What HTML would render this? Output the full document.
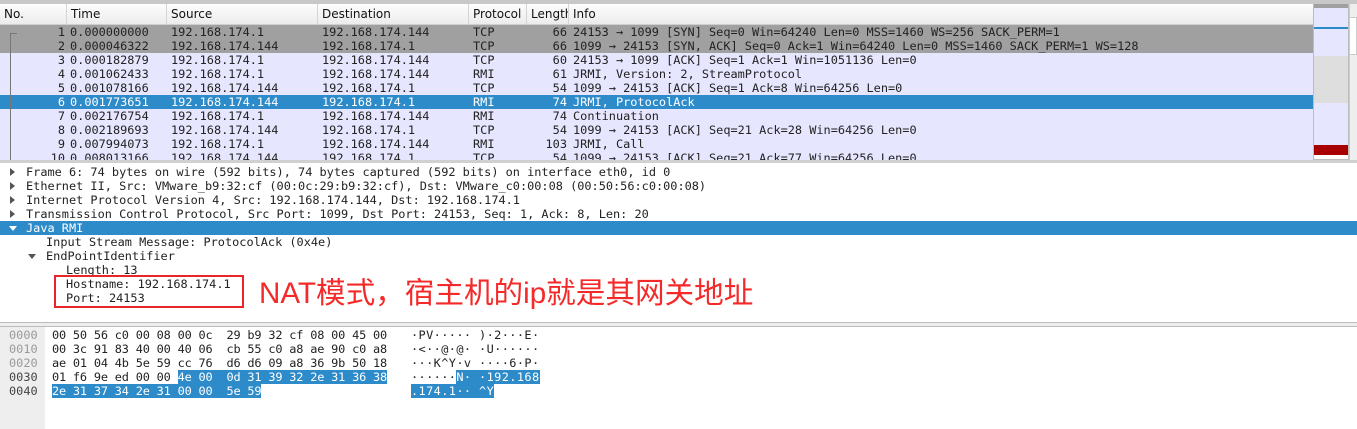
<!DOCTYPE html>
<html><head><meta charset="utf-8"><style>
*{margin:0;padding:0;box-sizing:border-box}
body{width:1357px;height:429px;overflow:hidden;background:#fff;position:relative;font-family:"DejaVu Sans Mono","Liberation Mono",monospace;font-size:11.9px;color:#222}
.abs{position:absolute}
.hdr{top:4px;height:21px;background:linear-gradient(#fdfdfd,#ececec);border-bottom:1px solid #cfcfcf;font-family:"DejaVu Sans","Liberation Sans",sans-serif;font-size:12px;line-height:21px;color:#111}
.hc{position:absolute;top:0;height:21px;border-right:1px solid #d4d4d4;padding-left:4px;white-space:nowrap;overflow:hidden}
.row{position:absolute;left:0;width:1313px;height:14px;line-height:14px;white-space:pre}
.row span{position:absolute;top:0}
.g{background:#a0a0a0}.l{background:#e7e6ff}.s{background:#2e8bc9;color:#fff}
.r{text-align:right}
.d{position:absolute;height:14px;line-height:14px;white-space:pre}
.tri{position:absolute;width:0;height:0}
.hx{position:absolute;white-space:pre;height:14px;line-height:14px}
.hl{background:#2e8bc9;color:#fff}
</style></head><body>
<div class="abs" style="left:0;top:0;width:1357px;height:4px;background:#c8c8c8"></div>
<div class="abs hdr" style="left:0;width:1313px">
<div class="hc" style="left:0;width:67px">No.</div>
<div class="hc" style="left:67px;width:100px">Time</div>
<div class="hc" style="left:167px;width:151px">Source</div>
<div class="hc" style="left:318px;width:151px">Destination</div>
<div class="hc" style="left:469px;width:58px">Protocol</div>
<div class="hc" style="left:527px;width:42px">Length</div>
<div class="hc" style="left:569px;width:744px;border:none">Info</div>
</div>
<div class="abs" style="left:0;top:25px;width:1313px;height:135px;overflow:hidden"><div id="pl" style="position:relative;top:-25px"></div></div>
<div class="abs" style="left:10px;top:33px;width:1px;height:127px;background:#777"></div>
<div class="abs" style="left:10px;top:33px;width:7px;height:1px;background:#777"></div>
<div class="abs" style="left:1313px;top:4px;width:36px;height:157px;background:#bdbdbd"></div>
<div class="abs" style="left:1314px;top:4px;width:34px;height:4px;background:#a0a0a0"></div>
<div class="abs" style="left:1314px;top:8px;width:34px;height:148px;background:#e7e6ff"></div>
<div class="abs" style="left:1314px;top:27px;width:34px;height:2px;background:#2e8bc9"></div>
<div class="abs" style="left:1314px;top:56px;width:34px;height:47px;background:#dedede"></div>
<div class="abs" style="left:1314px;top:145px;width:34px;height:10px;background:#a80000"></div>
<div class="abs" style="left:1314px;top:155px;width:34px;height:4px;background:#fff"></div>
<div class="abs" style="left:1349px;top:4px;width:8px;height:157px;background:#eee;border-left:1px solid #ccc"></div>
<div class="abs" style="left:1349px;top:17px;width:8px;height:38px;background:#fff;border:1px solid #ccc"></div>
<div class="abs" style="left:0;top:160px;width:1357px;height:3px;background:#d0d0d0"></div>
<div id="dt"></div>
<div class="abs" style="left:54px;top:275px;width:190px;height:33px;border:2px solid #e8262a"></div>
<div class="abs" style="left:259px;top:275px;font-family:'Liberation Sans','Noto Sans CJK SC',sans-serif;font-size:29.6px;line-height:37px;color:#f42a2a;white-space:nowrap">NAT模式，宿主机的ip就是其网关地址</div>
<div class="abs" style="left:0;top:322px;width:1357px;height:5px;background:#eee;border-top:1px solid #bbb;border-bottom:1px solid #bbb"></div>
<div class="abs" style="left:0;top:327px;width:45px;height:102px;background:#eeeeee"></div>
<div id="hx"></div>
<script>
var rows=[
["g","1","0.000000000","192.168.174.1","192.168.174.144","TCP","66","24153 → 1099 [SYN] Seq=0 Win=64240 Len=0 MSS=1460 WS=256 SACK_PERM=1"],
["g","2","0.000046322","192.168.174.144","192.168.174.1","TCP","66","1099 → 24153 [SYN, ACK] Seq=0 Ack=1 Win=64240 Len=0 MSS=1460 SACK_PERM=1 WS=128"],
["l","3","0.000182879","192.168.174.1","192.168.174.144","TCP","60","24153 → 1099 [ACK] Seq=1 Ack=1 Win=1051136 Len=0"],
["l","4","0.001062433","192.168.174.1","192.168.174.144","RMI","61","JRMI, Version: 2, StreamProtocol"],
["l","5","0.001078166","192.168.174.144","192.168.174.1","TCP","54","1099 → 24153 [ACK] Seq=1 Ack=8 Win=64256 Len=0"],
["s","6","0.001773651","192.168.174.144","192.168.174.1","RMI","74","JRMI, ProtocolAck"],
["l","7","0.002176754","192.168.174.1","192.168.174.144","RMI","74","Continuation"],
["l","8","0.002189693","192.168.174.144","192.168.174.1","TCP","54","1099 → 24153 [ACK] Seq=21 Ack=28 Win=64256 Len=0"],
["l","9","0.007994073","192.168.174.1","192.168.174.144","RMI","103","JRMI, Call"],
["l","10","0.008013166","192.168.174.144","192.168.174.1","TCP","54","1099 → 24153 [ACK] Seq=21 Ack=77 Win=64256 Len=0"]];
var h="";
rows.forEach(function(r,i){
var top=25+i*14;
h+='<div class="row '+r[0]+'" style="top:'+top+'px">'+
'<span class="r" style="left:0;width:65px">'+r[1]+'</span><span style="left:70px">'+r[2]+'</span><span style="left:171px">'+r[3]+'</span><span style="left:322px">'+r[4]+'</span><span style="left:473px">'+r[5]+'</span><span class="r" style="left:527px;width:40px">'+r[6]+'</span><span style="left:573px">'+r[7]+'</span></div>';
});
document.getElementById("pl").innerHTML=h;
var d=[[12,26,"Frame 6: 74 bytes on wire (592 bits), 74 bytes captured (592 bits) on interface eth0, id 0","r"],
[12,26,"Ethernet II, Src: VMware_b9:32:cf (00:0c:29:b9:32:cf), Dst: VMware_c0:00:08 (00:50:56:c0:00:08)","r"],
[12,26,"Internet Protocol Version 4, Src: 192.168.174.144, Dst: 192.168.174.1","r"],
[12,26,"Transmission Control Protocol, Src Port: 1099, Dst Port: 24153, Seq: 1, Ack: 8, Len: 20","r"],
[12,26,"Java RMI","ds"],
[0,46,"Input Stream Message: ProtocolAck (0x4e)",""],
[31,46,"EndPointIdentifier","d"],
[0,66,"Length: 13",""],[0,66,"Hostname: 192.168.174.1",""],[0,66,"Port: 24153",""]];
h="";
d.forEach(function(r,i){var top=165+i*14;var sel=r[3]=="ds";
if(sel)h+='<div class="abs" style="left:0;top:'+top+'px;width:1357px;height:14px;background:#2e8bc9"></div>';
if(r[3]=="r")h+='<div class="tri" style="left:'+(r[0]-2)+'px;top:'+(top+3)+'px;border-left:5px solid #555;border-top:4px solid transparent;border-bottom:4px solid transparent"></div>';
if(r[3]=="d"||sel)h+='<div class="tri" style="left:'+(r[0]-3)+'px;top:'+(top+5)+'px;border-top:5px solid '+(sel?'#fff':'#555')+';border-left:4px solid transparent;border-right:4px solid transparent"></div>';
h+='<div class="d" style="left:'+r[1]+'px;top:'+top+'px;'+(sel?'color:#fff':'')+'">'+r[2]+'</div>';});
document.getElementById("dt").innerHTML=h;
var hx=[["0000","00 50 56 c0 00 08 00 0c  29 b9 32 cf 08 00 45 00","","·PV····· )·2···E·",""],
["0010","00 3c 91 83 40 00 40 06  cb 55 c0 a8 ae 90 c0 a8","","·<··@·@· ·U······",""],
["0020","ae 01 04 4b 5e 59 cc 76  d6 d6 09 a8 36 9b 50 18","","···K^Y·v ····6·P·",""],
["0030","01 f6 9e ed 00 00 ","4e 00  0d 31 39 32 2e 31 36 38","······","N· ·192.168"],
["0040","","2e 31 37 34 2e 31 00 00  5e 59","",".174.1·· ^Y"]];
h="";
hx.forEach(function(r,i){var top=328+i*14;
h+='<div class="d" style="left:9px;top:'+top+'px;color:'+(i<3?'#9a9a9a':'#444')+'">'+r[0]+'</div>';
h+='<div class="hx" style="left:52px;top:'+top+'px;letter-spacing:-0.18px">'+r[1]+'<span class="hl">'+r[2]+'</span></div>';
h+='<div class="hx" style="left:411px;top:'+top+'px;letter-spacing:0.4px">'+r[3]+'<span class="hl">'+r[4]+'</span></div>';});
document.getElementById("hx").innerHTML=h;
</script>
</body></html>
